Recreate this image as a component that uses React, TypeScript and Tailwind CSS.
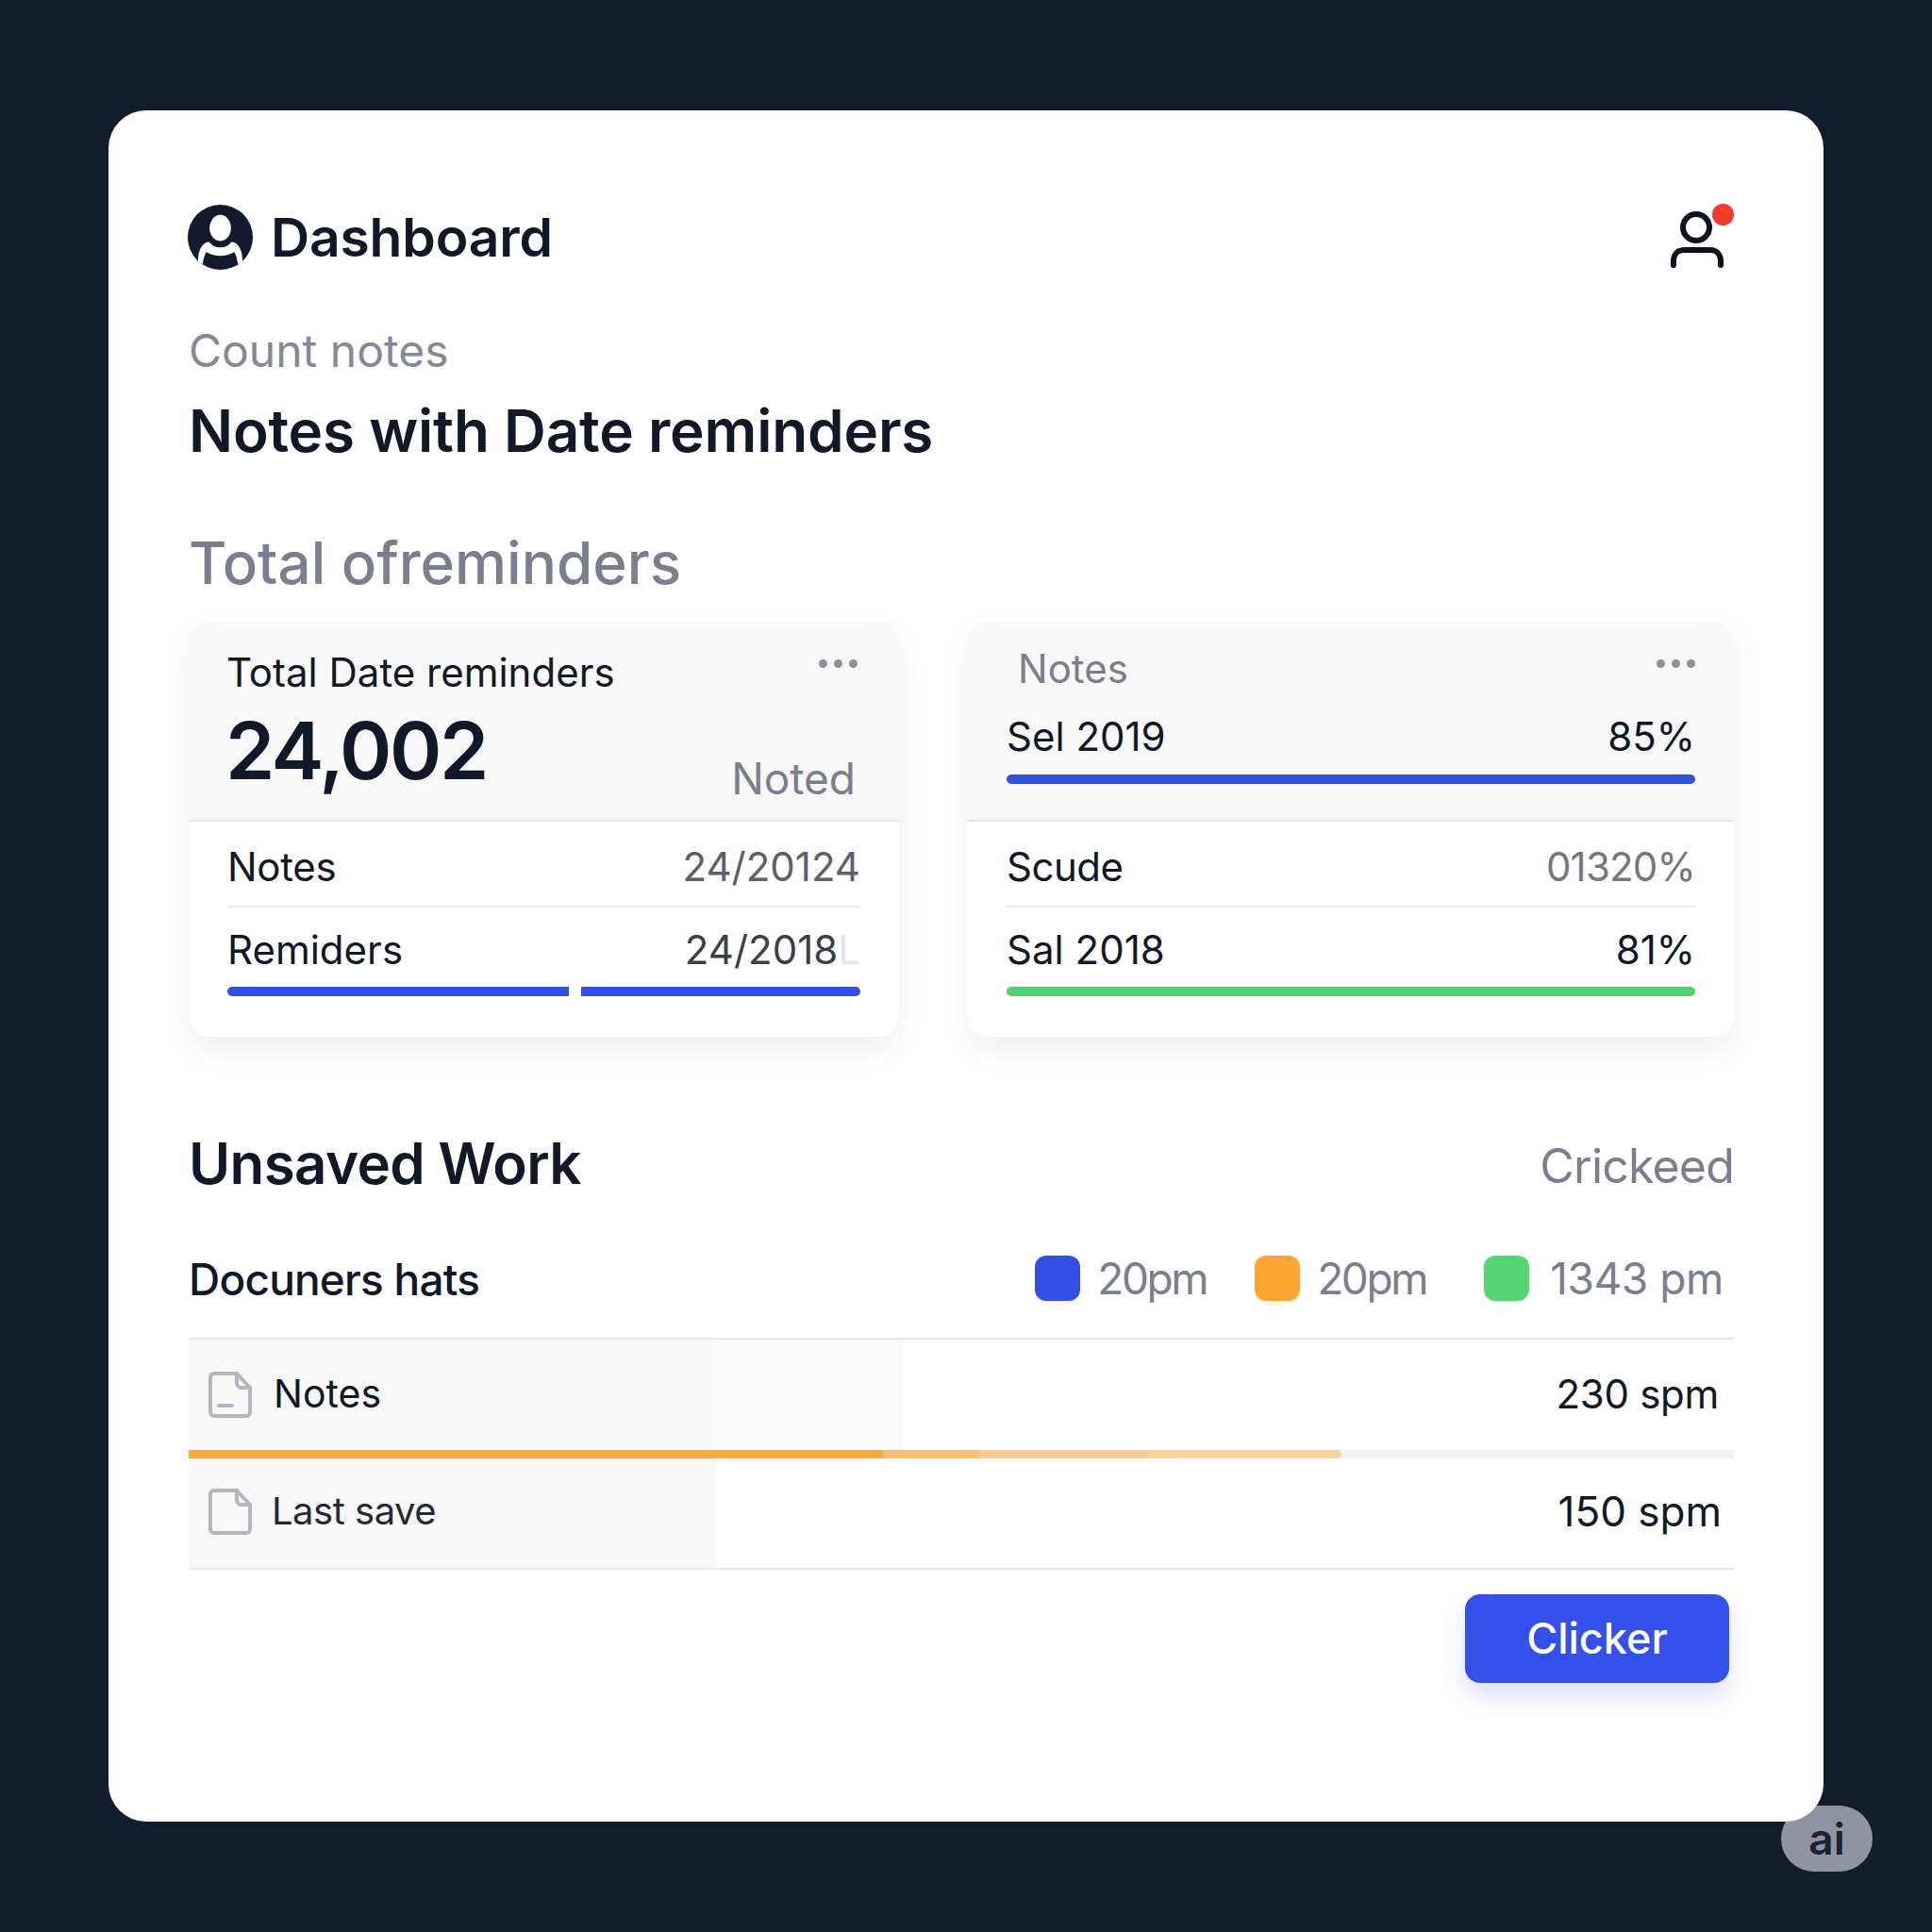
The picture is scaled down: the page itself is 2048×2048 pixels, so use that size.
import React from "react";

function DocIcon({ dash }: { dash?: boolean }) {
  return (
    <svg width="48" height="50" viewBox="0 0 48 50" fill="none" stroke="#b4b6c0" strokeWidth="4" strokeLinejoin="round" strokeLinecap="round">
      <path d="M10 3h21l14 15v26a4 4 0 0 1-4 4H7a4 4 0 0 1-4-4V7a4 4 0 0 1 4-4z" />
      <path d="M31 3v10a5 5 0 0 0 5 5h9" />
      {dash && <path d="M12 37h14" />}
    </svg>
  );
}

function Dots() {
  return (
    <div className="flex gap-[7px]">
      <span className="h-[9px] w-[9px] rounded-full bg-[#8b90a0]" />
      <span className="h-[9px] w-[9px] rounded-full bg-[#8b90a0]" />
      <span className="h-[9px] w-[9px] rounded-full bg-[#8b90a0]" />
    </div>
  );
}

function Legend({ color, label, tight }: { color: string; label: string; tight?: boolean }) {
  return (
    <div className={`flex items-center ${tight ? "gap-[18px]" : "gap-[22px]"}`}>
      <span className={`h-[48px] w-[48px] rounded-[12px] ${color}`} />
      <span className={`text-[46px] leading-none text-[#7b7e8c] ${tight ? "tracking-[-2.4px]" : "tracking-[-0.4px]"}`}>{label}</span>
    </div>
  );
}

export default function App() {
  return (
    <div className="relative h-[2048px] w-[2048px] bg-[#151c2e] px-[115px] pt-[117px] font-['Inter',sans-serif] text-[#111827]">
      <div className="relative z-10 flex h-[1814px] w-[1818px] flex-col rounded-[40px] bg-white pl-[85px] pr-[95px] pt-[99px]">
        {/* header */}
        <div className="flex items-center justify-between">
          <div className="flex items-center gap-[19px]">
            <svg className="-ml-px" width="69" height="71" viewBox="0 0 70 72">
              <circle cx="35" cy="36" r="35" fill="#131a2b" />
              <ellipse cx="35" cy="26" rx="11.5" ry="14" fill="#fff" />
              <path d="M11 63c0-14 5-22 12-22 3 4 7 6 12 6s9-2 12-6c7 0 12 8 12 22l-5 2c-1-6-2-10-4-13-5 3-10 4-15 4s-10-1-15-4c-2 3-3 7-4 13z" fill="#fff" />
            </svg>
            <h1 className="text-[57px] font-semibold leading-none tracking-[-0.2px]">Dashboard</h1>
          </div>
          <div className="relative mr-[6px] h-[70px] w-[64px]">
            <svg width="64" height="70" viewBox="0 0 64 70" fill="none" stroke="#0d1220" strokeWidth="6">
              <circle cx="30" cy="24" r="14" />
              <path d="M6 64v-4c0-8 5-12 11-12h28c6 0 11 4 11 12v4" strokeLinecap="round" />
            </svg>
            <span className="absolute right-[-6px] top-[-1px] h-[23px] w-[23px] rounded-full bg-[#f23c2b]" />
          </div>
        </div>

        <p className="mt-[61px] text-[48px] leading-none text-[#858895]">Count notes</p>
        <h2 className="mt-[30px] text-[62px] font-semibold leading-none tracking-[-0.2px]">Notes with Date reminders</h2>
        <p className="mt-[78px] text-[62px] font-medium leading-none text-[#7b7e8c]">Total ofreminders</p>

        {/* cards */}
        <div className="mt-[31px] flex gap-[73px]">
          <div className="h-[440px] w-[753px] overflow-hidden rounded-[22px] bg-white shadow-[0_14px_34px_rgba(20,25,45,0.07)]">
            <div className="h-[212px] border-b-2 border-[#e6e8ee] bg-[#f8f8f9] pl-[40px] pr-[44px] pt-[29px]">
              <div className="flex items-start justify-between">
                <span className="text-[42px] font-normal leading-[50px]">Total Date reminders</span>
                <div className="pt-[11px]"><Dots /></div>
              </div>
              <div className="mt-[16px] flex items-start justify-between pr-[2px]">
                <span className="-ml-px text-[84px] font-semibold leading-none tracking-[-2.5px]">24,002</span>
                <span className="mt-[48px] text-[46px] leading-none text-[#7b7e8c]">Noted</span>
              </div>
            </div>
            <div className="px-[41px]">
              <div className="flex h-[91px] items-center justify-between border-b-2 border-[#e9ebef] pt-[5px]">
                <span className="text-[42px] tracking-[-0.3px]">Notes</span>
                <span className="text-[42px] text-[#5c5f6c]">24/20124</span>
              </div>
              <div className="flex h-[84px] items-center justify-between pt-[4px]">
                <span className="text-[42px]">Remiders</span>
                <span className="text-[42px] text-[#3c3f4b]">
                  24/2018<span className="text-[#e3e5ea]">L</span>
                </span>
              </div>
              <div className="flex gap-[13px]">
                <div className="h-[10px] w-[362px] rounded-l-full bg-[#3350e6]" />
                <div className="h-[10px] flex-1 rounded-r-full bg-[#3350e6]" />
              </div>
            </div>
          </div>

          <div className="h-[440px] w-[812px] overflow-hidden rounded-[22px] bg-white shadow-[0_14px_34px_rgba(20,25,45,0.07)]">
            <div className="h-[212px] border-b-2 border-[#e6e8ee] bg-[#f8f8f9] pl-[41px] pr-[41px] pt-[25px]">
              <div className="flex items-start justify-between">
                <span className="pl-[12px] text-[42px] leading-[50px] text-[#7b7e8c]">Notes</span>
                <div className="pt-[15px]"><Dots /></div>
              </div>
              <div className="mt-[22px] flex justify-between text-[42px] leading-[50px]">
                <span>Sel 2019</span>
                <span>85%</span>
              </div>
              <div className="mt-[15px] h-[10px] rounded-full bg-[#3350e6]" />
            </div>
            <div className="px-[41px]">
              <div className="flex h-[91px] items-center justify-between border-b-2 border-[#e9ebef] pt-[5px]">
                <span className="text-[42px] tracking-[-0.5px]">Scude</span>
                <span className="text-[42px] tracking-[-0.8px] text-[#75777f]">01320%</span>
              </div>
              <div className="flex h-[84px] items-center justify-between pt-[4px] text-[42px]">
                <span>Sal 2018</span>
                <span>81%</span>
              </div>
              <div className="h-[10px] rounded-full bg-[#4fd36f]" />
            </div>
          </div>
        </div>

        {/* unsaved work */}
        <div className="mt-[104px] flex items-center justify-between">
          <h2 className="text-[60px] font-semibold leading-none tracking-[-0.6px]">Unsaved Work</h2>
          <span className="pt-[5px] text-[50px] leading-none tracking-[-0.8px] text-[#7b7e8c]">Crickeed</span>
        </div>

        <div className="mt-[68px] flex h-[89px] items-start justify-between border-b-2 border-[#e6e8ee]">
          <span className="text-[46px] font-medium leading-[50px] tracking-[-0.8px]">Docuners hats</span>
          <div className="flex pr-[11px]">
            <div className="mr-[51px]"><Legend color="bg-[#3350e6]" label="20pm" tight /></div>
            <div className="mr-[61px]"><Legend color="bg-[#fda632]" label="20pm" tight /></div>
            <Legend color="bg-[#55d672]" label="1343 pm" />
          </div>
        </div>

        <div className="flex h-[117px] bg-white">
          <div className="flex w-full items-center justify-between bg-[linear-gradient(to_right,#f8f8f9_34%,#fafafb_34%,#fafafb_46.2%,#ffffff_46.2%)] pb-[2px] pl-[20px] pr-[16px]">
            <div className="flex items-center gap-[22px]">
              <DocIcon dash />
              <span className="text-[41px]">Notes</span>
            </div>
            <span className="text-[42px] tracking-[-0.3px]">230 spm</span>
          </div>
        </div>
        <div className="flex h-[9px] bg-[#f3f4f6]">
          <div className="h-full w-[736px] bg-[#fdab3d]" />
          <div className="h-full w-[102px] bg-[#fcbf74]" />
          <div className="h-full w-[180px] bg-[#fbcd92]" />
          <div className="h-full w-[204px] rounded-r-full bg-[#fbd39e]" />
        </div>
        <div className="flex h-[118px] items-center justify-between border-b-2 border-[#e6e8ee] bg-[linear-gradient(to_right,#f8f8f9_34.1%,#ffffff_34.1%)] pb-[4px] pl-[20px] pr-[13px]">
          <div className="flex items-center gap-[20px]">
            <DocIcon />
            <span className="text-[40px] tracking-[-0.5px] text-[#252937]">Last save</span>
          </div>
          <span className="text-[44px]">150 spm</span>
        </div>

        <div className="mt-[26px] flex justify-end pr-[5px]">
          <button className="h-[94px] w-[280px] rounded-[16px] bg-[#3350ea] text-[45px] font-medium text-white shadow-[0_14px_26px_rgba(51,80,234,0.18)]">
            Clicker
          </button>
        </div>
      </div>

      <div className="absolute left-[1888px] top-[1914px] flex h-[70px] w-[97px] items-center justify-center rounded-full bg-[#8f94a1] text-[46px] font-semibold text-[#1c2233]">
        ai
      </div>
    </div>
  );
}
